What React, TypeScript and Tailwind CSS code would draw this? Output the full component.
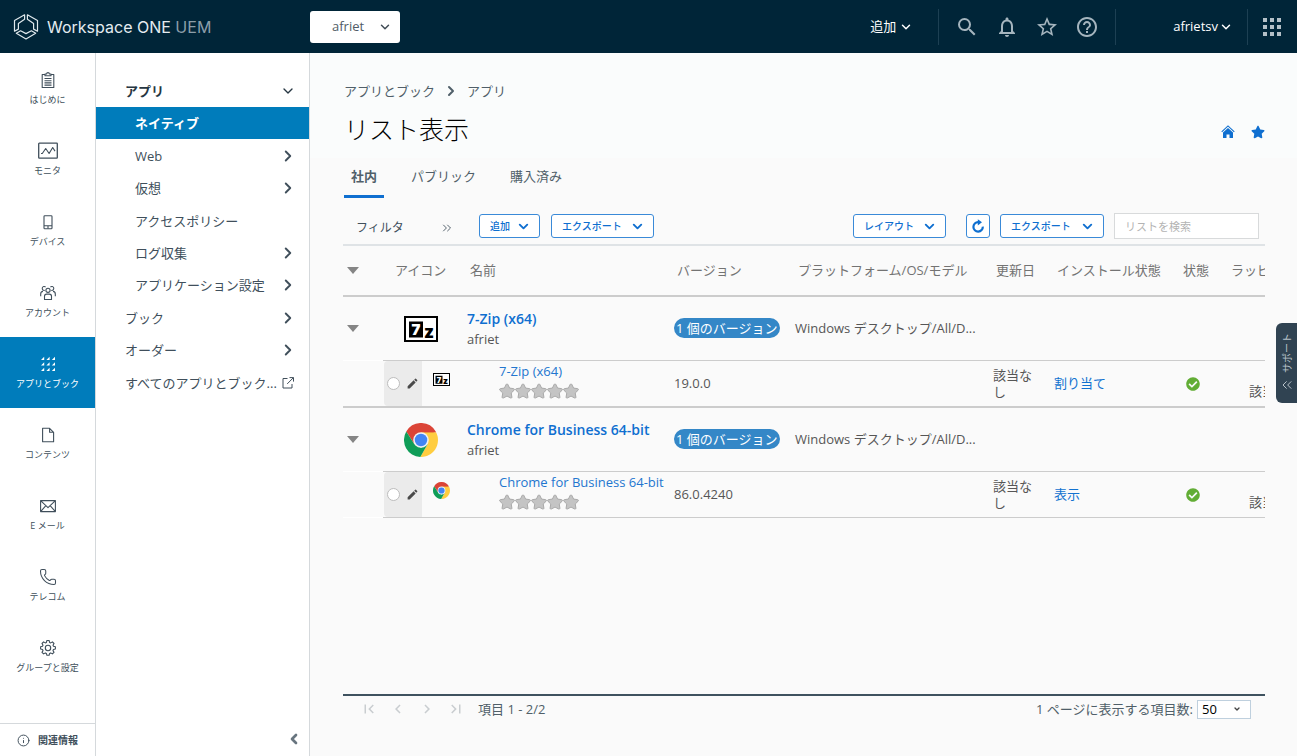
import { clsx } from "clsx";
import { ChevronDown, ChevronLeft, ChevronRight, ChevronsLeft, ChevronsRight, Info, Phone } from "lucide-react";
import type { ReactNode } from "react";
import { FaCheckCircle, FaStar } from "react-icons/fa";
import { MdEdit, MdFirstPage, MdHelpOutline, MdLastPage, MdNavigateBefore, MdNavigateNext, MdNotificationsNone, MdSearch, MdStarBorder } from "react-icons/md";

const LineIcon = ({ children, width = 18 }: { children: ReactNode; width?: number }) => (
  <svg width={width} height="18" viewBox={`0 0 ${width} 18`} fill="none" stroke="currentColor" strokeWidth="1.1" strokeLinejoin="round" aria-hidden="true">
    {children}
  </svg>
);

const ClipboardIcon = () => (
  <LineIcon>
    <path d="M6 3.5H3.2v13h11.6v-13H12M6 4.8V3h1.6a1.4 1.4 0 0 1 2.8 0H12v1.8z" />
    <path d="M5.5 7.5h7M5.5 9.7h7M5.5 11.9h7M5.5 14.1h7" />
  </LineIcon>
);

const MonitorIcon = () => (
  <LineIcon width={20}>
    <rect x="0.7" y="1.2" width="18.6" height="15" rx="0.6" strokeWidth="1.3" />
    <path d="M3 11.5h1.3l3.4-5 3.4 5 3.6-6 2.3 3.6" />
  </LineIcon>
);

const DeviceIcon = () => (
  <LineIcon>
    <rect x="5" y="2.7" width="8" height="13" rx="0.8" />
    <path d="M5 12.8h8M9 12.8v2.6" />
  </LineIcon>
);

const AccountsIcon = () => (
  <LineIcon>
    <circle cx="9" cy="6.3" r="2.1" />
    <path d="M5.5 15.5v-3.2c0-1.4.9-2.2 2.1-2.2h2.8c1.2 0 2.1.8 2.1 2.2v3.2z" />
    <path d="M5.7 6.4A2 2 0 1 1 6.6 3M12.3 6.4A2 2 0 1 0 11.4 3M4 7.4C2.4 7.6 1.7 8.5 1.7 9.9v2.3M14 7.4c1.6.2 2.3 1.1 2.3 2.5v2.3" />
  </LineIcon>
);

const AppsIcon = () => (
  <LineIcon>
    <path
      fill="currentColor"
      stroke="none"
      d="M2 5h3.200V1.800zM7.400 5h3.200V1.800zM12.800 5H16V1.800zM2 10.500h3.200V7.300zM7.400 10.500h3.200V7.300zM12.800 10.500H16V7.300zM2 16h3.200v-3.200zM7.400 16h3.200v-3.200zM12.800 16H16v-3.200z"
    />
  </LineIcon>
);

const ContentIcon = () => (
  <LineIcon>
    <path d="M3.600 2.300h7l4 4v9.400h-11zM10.600 2.300v4h4" />
  </LineIcon>
);

const MailIcon = () => (
  <LineIcon>
    <path d="M1.600 3.600h14.800v11H1.600zM1.600 3.600 9 10.600l7.400-7M1.600 14.600l5.300-6M16.400 14.600l-5.300-6" />
  </LineIcon>
);

const GearIcon = () => (
  <LineIcon>
    <circle cx="9" cy="9" r="2.700" />
    <path d="M7.900 1.500h2.200l.5 1.900 1.100.5 1.700-1 1.600 1.600-1 1.700.5 1.100 1.900.5v2.200l-1.900.5-.5 1.100 1 1.700-1.600 1.600-1.700-1-1.100.5-.5 1.900H7.900l-.5-1.900-1.100-.5-1.700 1L3 13.300l1-1.700-.5-1.100-1.900-.5V7.800l1.900-.5.5-1.100-1-1.700 1.600-1.600 1.700 1 1.100-.5z" />
  </LineIcon>
);

const Logo = () => (
  <svg width="26" height="28" viewBox="-1 -1 26 28" fill="none" stroke="#dfe8ec" strokeWidth="1.200" strokeLinejoin="round" aria-hidden="true">
    <path d="M10.600.8.500 6.400V17.200l3.900-2.100V9.400L10.600 5.300z" />
    <path d="M13.400.8 23.500 6.400V17.200l-3.900-2.100V9.400L13.400 5.300z" />
    <path d="M2.300 19.300 6.600 16.800 12 19.600l5.400-2.800 4.300 2.500L12 25z" />
  </svg>
);

const GridIcon = () => (
  <svg width="18" height="18" viewBox="0 0 18 18" fill="currentColor" aria-hidden="true">
    <path d="M0 0h4v4H0zM7 0h4v4H7zM14 0h4v4h-4zM0 7h4v4H0zM7 7h4v4H7zM14 7h4v4h-4zM0 14h4v4H0zM7 14h4v4H7zM14 14h4v4h-4z" />
  </svg>
);

const HomeIcon = () => (
  <svg width="14" height="14" viewBox="0 0 14 14" fill="none" aria-hidden="true">
    <path d="M.7 6.800 7 .9l6.300 5.900" stroke="currentColor" strokeWidth="1.100" />
    <path d="M2 7.600 7 3l5 4.600V13H8.500V9.500h-3V13H2z" fill="currentColor" />
  </svg>
);

const SevenZipIcon = ({ size }: { size: number }) => (
  <svg width={size} height={(size * 26) / 34} viewBox="0 0 34 26" aria-hidden="true">
    <rect x="1" y="1" width="32" height="24" fill="#fff" stroke="#000" strokeWidth="2" />
    <rect x="5" y="5.500" width="14" height="16" fill="#000" />
    <text x="7.500" y="19" fill="#fff" fontSize="15" fontWeight="900" fontFamily="Inter, sans-serif">
      7
    </text>
    <text x="20" y="21.500" fill="#000" fontSize="17" fontWeight="900" fontFamily="Inter, sans-serif">
      z
    </text>
  </svg>
);

const ChromeIcon = ({ size }: { size: number }) => (
  <svg width={size} height={size} viewBox="0 0 48 48" aria-hidden="true">
    <path fill="#db4437" d="M24 24 3.200 12A24 24 0 0 1 44.800 12z" />
    <path fill="#ffcd40" d="M24 13h21.300A24 24 0 0 1 23 48l10.500-18.500z" />
    <path fill="#db4437" d="M3.200 12 14.500 29.500 24 13h21.300l-.5-1z" />
    <path fill="#0f9d58" d="M3.200 12 14.500 29.500 24 35l9.500-5.500L23 48A24 24 0 0 1 3.200 12z" />
    <circle cx="24" cy="24" r="11" fill="#f1f1f1" />
    <circle cx="24" cy="24" r="8.800" fill="#4285f4" />
  </svg>
);

const RefreshIcon = () => (
  <svg width="14" height="14" viewBox="0 0 14 14" fill="none" aria-hidden="true">
    <path d="M11.800 7.600A4.700 4.700 0 1 1 7.200 3.200" stroke="currentColor" strokeWidth="2.200" />
    <path d="M6.800.2 11 3.200 6.800 6.400z" fill="currentColor" />
  </svg>
);

const OpenIcon = () => (
  <svg width="12" height="12" viewBox="0 0 12 12" fill="none" stroke="currentColor" aria-hidden="true">
    <path d="M5.500 1.500H1v9.500h9V7M7.500.6h4v4M11.400.7 5.200 6.900" />
  </svg>
);

const mainNav = [
  { label: "はじめに", icon: <ClipboardIcon /> },
  { label: "モニタ", icon: <MonitorIcon /> },
  { label: "デバイス", icon: <DeviceIcon /> },
  { label: "アカウント", icon: <AccountsIcon /> },
  { label: "アプリとブック", icon: <AppsIcon />, active: true },
  { label: "コンテンツ", icon: <ContentIcon /> },
  { label: "E メール", icon: <MailIcon /> },
  { label: "テレコム", icon: <Phone size={18} strokeWidth={1.4} /> },
  { label: "グループと設定", icon: <GearIcon /> },
];

const subNav = [
  { label: "ネイティブ", nested: true, active: true },
  { label: "Web", nested: true, more: true },
  { label: "仮想", nested: true, more: true },
  { label: "アクセスポリシー", nested: true },
  { label: "ログ収集", nested: true, more: true },
  { label: "アプリケーション設定", nested: true, more: true },
  { label: "ブック", more: true },
  { label: "オーダー", more: true },
  { label: "すべてのアプリとブック...", external: true },
];

const apps = [
  { name: "7-Zip (x64)", Icon: SevenZipIcon, version: "19.0.0", install: "割り当て" },
  { name: "Chrome for Business 64-bit", Icon: ChromeIcon, version: "86.0.4240", install: "表示" },
];

const OutlineButton = ({ children, className }: { children: ReactNode; className: string }) => (
  <button type="button" className={clsx("flex h-6 shrink-0 items-center justify-between rounded-[3px] border border-[#3a8ad8] bg-white pr-2 pl-2.5 text-[10px] font-medium text-[#0f6fd0]", className)}>
    {children}
    <ChevronDown size={15} strokeWidth={3} />
  </button>
);

const TopBar = () => (
  <header className="flex h-[53px] shrink-0 items-center bg-[#002538] text-white">
    <div className="flex w-[310px] shrink-0 items-center gap-2 pl-[13px]">
      <Logo />
      <span className="font-['Inter',sans-serif] text-base leading-5 text-[#e4ecf0]">
        Workspace ONE <span className="text-[#8c9ea9]">UEM</span>
      </span>
    </div>

    <div className="relative">
      <select aria-label="組織グループ" className="h-8 w-[90px] appearance-none rounded-[3px] bg-white pl-[22px] text-[13px] text-[#505c66]">
        <option>afriet</option>
      </select>
      <ChevronDown size={14} strokeWidth={2.5} className="pointer-events-none absolute top-[9px] right-2 text-[#404c56]" />
    </div>

    <div className="ml-auto flex h-9 items-center">
      <button type="button" className="flex items-center gap-[3px] pr-[25px] text-[13px]">
        追加
        <ChevronDown size={14} strokeWidth={2.5} />
      </button>
      <div className="flex h-full items-center gap-4 border-x border-[#1d4053] px-4 text-2xl text-[#a5b5be]">
        <button type="button" aria-label="検索">
          <MdSearch />
        </button>
        <button type="button" aria-label="通知">
          <MdNotificationsNone />
        </button>
        <button type="button" aria-label="お気に入り">
          <MdStarBorder />
        </button>
        <button type="button" aria-label="ヘルプ">
          <MdHelpOutline />
        </button>
      </div>
      <button type="button" className="flex items-center gap-px pr-3.5 pl-[57px] text-[13px]">
        afrietsv
        <ChevronDown size={14} strokeWidth={2.5} />
      </button>
      <button type="button" aria-label="アプリ一覧" className="flex h-full items-center border-l border-[#1d4053] pr-4 pl-[15px] text-[#b4c0c7]">
        <GridIcon />
      </button>
    </div>
  </header>
);

const MainNav = () => (
  <nav className="flex w-24 shrink-0 flex-col border-r border-[#d5d9dc] bg-white text-[#404f5b]">
    {mainNav.map(({ label, icon, active }) => (
      <a key={label} href="#" className={clsx("flex h-[71px] flex-col items-center gap-[3px] pt-[18px] text-[9px] leading-4", active && "bg-[#007cbb] text-white")}>
        {icon}
        {label}
      </a>
    ))}
    <a href="#" className="mt-auto flex h-[33px] items-center justify-center gap-2 border-t border-[#d5d9dc] text-[10px] font-bold">
      <Info size={13} strokeWidth={1.8} />
      関連情報
    </a>
  </nav>
);

const SubNav = () => (
  <nav className="flex w-[214px] shrink-0 flex-col border-r border-[#d5d9dc] bg-white text-[13px] leading-5 text-[#404f5b]">
    <button type="button" className="mt-[21px] flex h-[33px] items-center justify-between pr-[13px] pl-[29px] font-bold text-[#263642]">
      アプリ
      <ChevronDown size={16} strokeWidth={2} />
    </button>
    <div className="grid h-[292px] auto-rows-fr">
      {subNav.map(({ label, nested, active, more, external }) => (
        <a
          key={label}
          href="#"
          className={clsx("flex items-center justify-between whitespace-nowrap", nested ? "pl-[39px]" : "pl-[29px]", more ? "pr-3" : "pr-[15px]", active && "bg-[#007cbb] font-bold text-white")}
        >
          {label}
          {more && <ChevronRight size={18} strokeWidth={2.5} />}
          {external && <OpenIcon />}
        </a>
      ))}
    </div>
    <button type="button" aria-label="メニューを閉じる" className="mt-auto flex h-[34px] items-center self-end pr-[7px] text-[#68757f]">
      <ChevronLeft size={16} strokeWidth={4} />
    </button>
  </nav>
);

const Caret = () => (
  <svg width="12" height="7" viewBox="0 0 12 7" className="ml-1" aria-hidden="true">
    <path d="M0 0h12L6 7z" fill="#858585" />
  </svg>
);

const AppTable = () => (
  <div className="flex-1 overflow-hidden">
    <table className="w-full min-w-[965px] table-fixed border-separate border-spacing-0 text-left text-[#565656]">
      <colgroup>
        <col className="w-10" />
        <col className="w-[84px]" />
        <col className="w-[207px]" />
        <col className="w-[121px]" />
        <col className="w-[198px]" />
        <col className="w-[61px]" />
        <col className="w-[126px]" />
        <col className="w-12" />
        <col className="w-20" />
      </colgroup>
      <thead>
        <tr className="h-[51px] text-[#737373] [&>th]:border-b-2 [&>th]:border-[#cccccc] [&>th]:p-0 [&>th]:font-normal [&>th]:whitespace-nowrap">
          <th aria-label="展開">
            <Caret />
          </th>
          <th>
            <span className="pl-3">アイコン</span>
          </th>
          <th>
            <span className="pl-[3px]">名前</span>
          </th>
          <th>
            <span className="pl-[3px]">バージョン</span>
          </th>
          <th>
            <span className="pl-[3px]">プラットフォーム/OS/モデル</span>
          </th>
          <th>
            <span className="pl-[3px]">更新日</span>
          </th>
          <th>
            <span className="pl-[3px]">インストール状態</span>
          </th>
          <th>
            <span className="pl-[3px]">状態</span>
          </th>
          <th>
            <span className="pl-[3px]">ラッピング</span>
          </th>
        </tr>
      </thead>
      {apps.map(({ name, Icon, version, install }, index) => {
        const last = index === apps.length - 1;

        return (
          <tbody key={name}>
            <tr className="h-16 [&>td]:border-b [&>td]:border-[#cccccc] [&>td]:p-0">
              <td className="border-white!">
                <button type="button" aria-label="折りたたむ" className="block">
                  <Caret />
                </button>
              </td>
              <td>
                <div className="flex w-[75px] justify-center">
                  <Icon size={34} />
                </div>
              </td>
              <td className="leading-5">
                <a href="#" className="block text-sm leading-5 font-semibold whitespace-nowrap text-[#0f6fd0]">
                  {name}
                </a>
                afriet
              </td>
              <td>
                <span className="inline-block rounded-full bg-[#3487c7] px-0.5 leading-5 whitespace-nowrap text-white">1 個のバージョン</span>
              </td>
              <td className="whitespace-nowrap">Windows デスクトップ/All/D...</td>
              <td />
              <td />
              <td />
              <td />
            </tr>
            <tr className={clsx("[&>td]:border-[#cccccc] [&>td]:p-0", last ? "h-[46px] [&>td]:border-b" : "h-[47px] [&>td]:border-b-2")}>
              <td className={clsx(last && "border-white!")} />
              <td>
                <div className="flex h-[45px] items-center">
                  <div className="ml-px flex h-full w-[38px] items-center gap-1.5 rounded-l bg-[#ebebeb] pl-[3px]">
                    <input type="radio" name="app" aria-label={name} className="size-[13px] appearance-none rounded-full border border-[#bdbdbd] bg-white" />
                    <button type="button" aria-label="編集" className="text-[#4a4a4a]">
                      <MdEdit size={13} />
                    </button>
                  </div>
                  <div className="mb-2 ml-[11px]">
                    <Icon size={17} />
                  </div>
                </div>
              </td>
              <td className="align-top">
                <div className="pl-8">
                  <a href="#" className="block leading-5 whitespace-nowrap text-[#2376cf]">
                    {name}
                  </a>
                  <div className="flex h-5 items-center text-[#c4c4c4]">
                    {Array.from({ length: 5 }).map((_, i) => (
                      <FaStar key={i} size={16} stroke="#a3a3a3" strokeWidth={32} />
                    ))}
                  </div>
                </div>
              </td>
              <td>{version}</td>
              <td />
              <td>
                <div className="w-10 leading-[17px]">該当なし</div>
              </td>
              <td>
                <a href="#" className="text-[#1272d0]">
                  {install}
                </a>
              </td>
              <td>
                <FaCheckCircle size={14} className="ml-1.5 text-[#62ad35]" aria-label="有効" />
              </td>
              <td className="pb-1.5! pl-[21px]! align-bottom leading-[17px] whitespace-nowrap">該当なし</td>
            </tr>
          </tbody>
        );
      })}
    </table>
  </div>
);

const Pager = () => (
  <footer className="flex h-[62px] shrink-0 items-start border-t-2 border-[#3f525f] pt-[3px] leading-5 text-[#505f69]">
    <div className="flex h-5 items-center gap-[11px] pl-[17px] text-lg text-[#c9cdd0]">
      <button type="button" aria-label="最初のページ">
        <MdFirstPage />
      </button>
      <button type="button" aria-label="前のページ">
        <MdNavigateBefore />
      </button>
      <button type="button" aria-label="次のページ">
        <MdNavigateNext />
      </button>
      <button type="button" aria-label="最後のページ">
        <MdLastPage />
      </button>
    </div>
    <span className="pl-[13px]">項目 1 - 2/2</span>

    <div className="ml-auto flex items-center gap-1 pr-3.5">
      <label htmlFor="page-size">1 ページに表示する項目数:</label>
      <div className="relative">
        <select id="page-size" className="block h-[19px] w-[54px] appearance-none border border-[#bfd0de] bg-white pl-1 text-[13px] leading-4 text-black">
          <option>50</option>
        </select>
        <ChevronDown size={8} strokeWidth={4} className="pointer-events-none absolute top-[5px] right-2.5 text-[#444444]" />
      </div>
    </div>
  </footer>
);

export default function App() {
  return (
    <div className="flex min-h-screen flex-col bg-[#fafafa] font-['Open_Sans','Noto_Sans_CJK_JP',sans-serif] text-[13px]">
      <TopBar />

      <div className="flex flex-1">
        <MainNav />
        <SubNav />

        <main className="flex min-w-0 flex-1 flex-col">
          {/* Page heading */}
          <div className="flex items-end justify-between bg-[#fafcfc] pt-7 pr-8 pb-3 pl-[34px]">
            <div>
              <div className="flex items-center gap-2 leading-5 text-[#505f69]">
                <a href="#">アプリとブック</a>
                <ChevronRight size={16} strokeWidth={3} />
                <span>アプリ</span>
              </div>
              <h1 className="mt-3 mb-px text-[25px] leading-8 font-light text-black">リスト表示</h1>
            </div>
            <div className="flex h-7 items-center gap-4 text-sm text-[#0f6fd0]">
              <button type="button" aria-label="ホーム">
                <HomeIcon />
              </button>
              <button type="button" aria-label="お気に入りに追加">
                <FaStar />
              </button>
            </div>
          </div>

          <div className="flex flex-1 flex-col pr-8 pl-[33px]">
            <div role="tablist" className="flex h-10 gap-5 pl-px leading-5 text-[#505f69]">
              <button type="button" role="tab" aria-selected="true" className="border-b-3 border-[#0f6fd0] px-[7px] pb-0.5 font-bold">
                社内
              </button>
              <button type="button" role="tab" aria-selected="false" className="border-b-3 border-transparent px-[7px] pb-0.5">
                パブリック
              </button>
              <button type="button" role="tab" aria-selected="false" className="border-b-3 border-transparent px-[7px] pb-0.5">
                購入済み
              </button>
            </div>

            {/* Toolbar */}
            <div className="flex h-12 shrink-0 items-center border-b-2 border-[#dfe3e6] pt-2.5">
              <button type="button" className="flex w-[111px] items-center justify-between pt-[3px] pl-[13px] text-xs text-[#404f5b]">
                フィルタ
                <ChevronsRight size={14} strokeWidth={1.5} />
              </button>
              <div className="flex flex-1 items-center gap-[11px] pl-[25px]">
                <OutlineButton className="w-[61px]">追加</OutlineButton>
                <OutlineButton className="w-[103px]">エクスポート</OutlineButton>
              </div>
              <div className="flex items-center gap-2.5 pr-1.5">
                <OutlineButton className="mr-2.5 w-[93px]">レイアウト</OutlineButton>
                <button type="button" aria-label="更新" className="flex size-6 items-center justify-center rounded-[3px] border border-[#3a8ad8] bg-white text-[#0f6fd0]">
                  <RefreshIcon />
                </button>
                <OutlineButton className="w-[104px]">エクスポート</OutlineButton>
                <input type="text" aria-label="リストを検索" placeholder="リストを検索" className="h-[26px] w-[145px] border border-[#d8dadb] bg-white px-2.5 text-[11px] placeholder:text-[#b3b3b3]" />
              </div>
            </div>

            <AppTable />
            <Pager />
          </div>
        </main>
      </div>

      {/* Support drawer handle */}
      <button type="button" className="fixed top-[323px] right-0 flex h-20 w-[21px] flex-col items-center justify-center gap-1 rounded-l-md bg-[#304352] text-[10px] text-[#b8c2c9]">
        <span className="rotate-180 leading-4 [text-orientation:sideways] [writing-mode:vertical-rl]">サポート</span>
        <ChevronsLeft size={16} strokeWidth={1.5} />
      </button>
    </div>
  );
}
